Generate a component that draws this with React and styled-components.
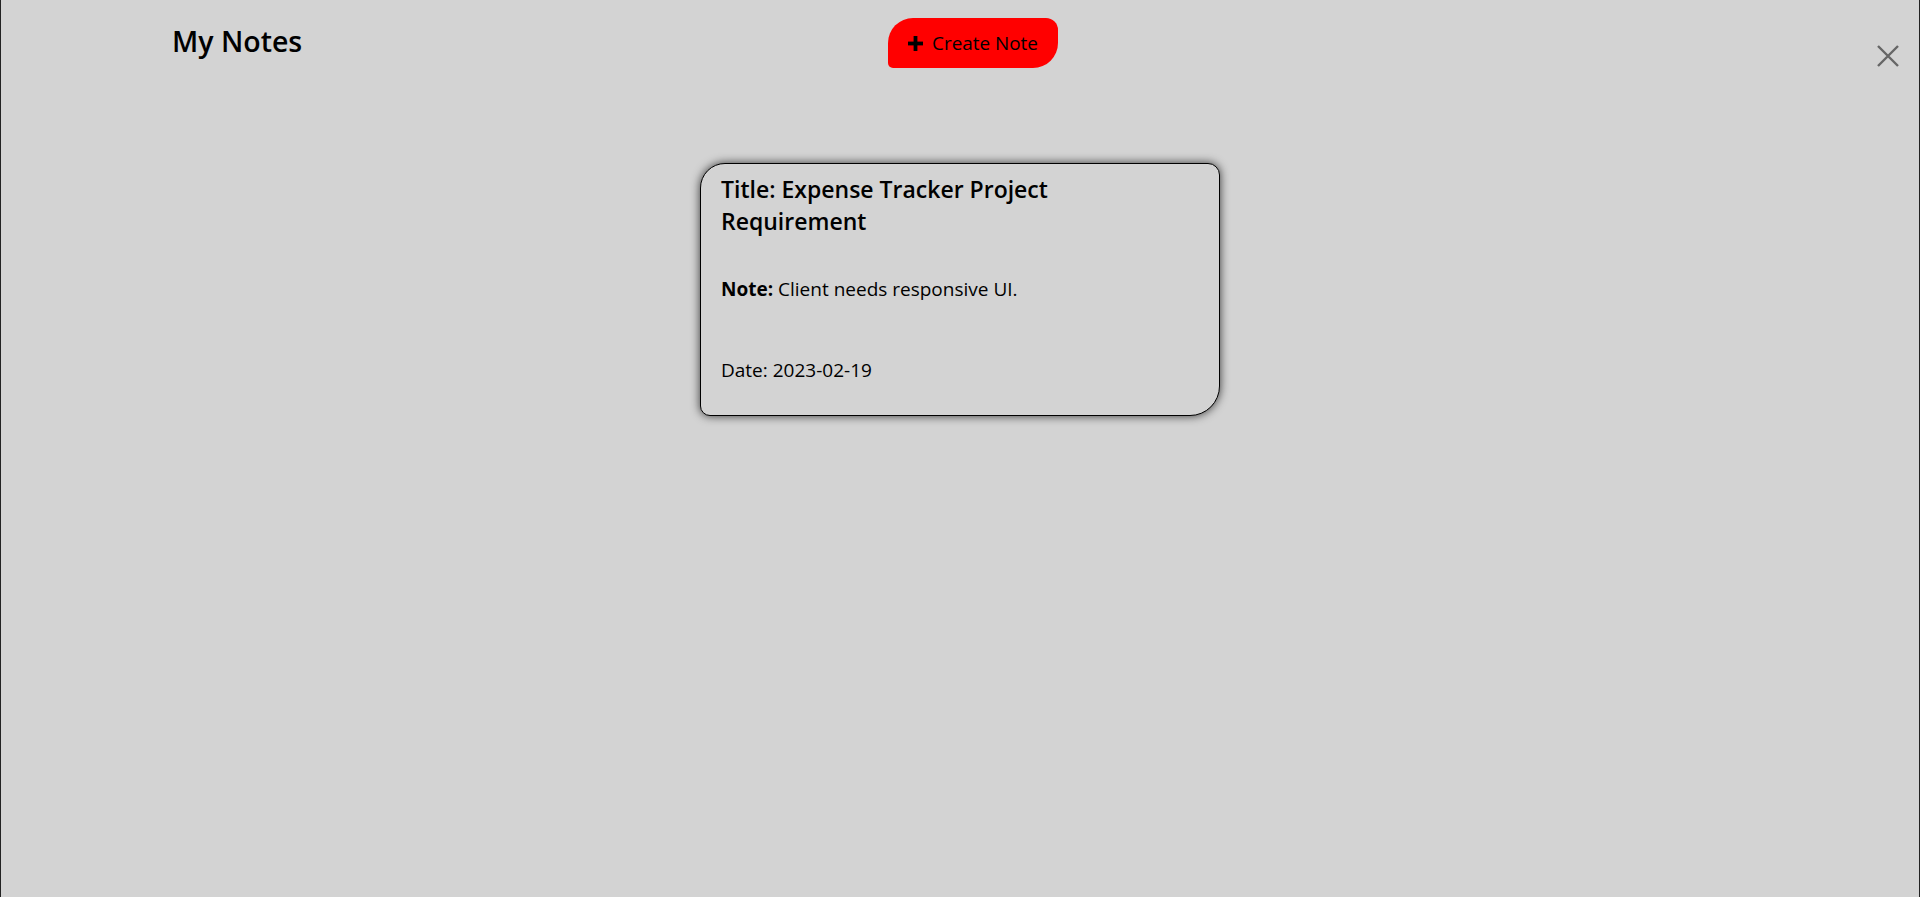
import styled, { createGlobalStyle } from 'styled-components';

const GlobalStyle = createGlobalStyle`
  html, body {
    margin: 0;
    padding: 0;
    background-color: #d3d3d3;
    font-family: "Open Sans", "Noto Sans", sans-serif;
    color: #000;
  }
`;

const notes = [
  {
    id: 1,
    title: 'Expense Tracker Project Requirement',
    note: 'Client needs responsive UI.',
    date: '2023-02-19',
  },
];

const PlusIcon = () => (
  <svg width="15" height="15" viewBox="0 0 15 15">
    <rect x="5.6" y="0" width="3.8" height="15" fill="#000" />
    <rect x="0" y="5.6" width="15" height="3.8" fill="#000" />
  </svg>
);

const CloseIcon = () => (
  <svg width="22" height="22" viewBox="0 0 22 22">
    <path d="M1 1 L21 21 M21 1 L1 21" stroke="#666" strokeWidth="2.4" fill="none" />
  </svg>
);

const NoteCard = ({ note }) => (
  <Card>
    <CardTitle>Title: {note.title}</CardTitle>
    <NoteText>
      <b>Note:</b> {note.note}
    </NoteText>
    <DateText>Date: {note.date}</DateText>
  </Card>
);

const App = () => {
  return (
    <Page>
      <GlobalStyle />
      <Header>
        <Heading>My Notes</Heading>
        <CreateButton>
          <PlusIcon />
          Create Note
        </CreateButton>
        <CloseButton aria-label="close">
          <CloseIcon />
        </CloseButton>
      </Header>
      <NotesList>
        {notes.map((n) => (
          <NoteCard key={n.id} note={n} />
        ))}
      </NotesList>
    </Page>
  );
};

const Page = styled.div`
  box-sizing: border-box;
  min-height: 100vh;
  border-left: 1px solid #222;
  border-right: 1px solid #222;
`;

const Header = styled.header`
  display: flex;
  align-items: flex-start;
  padding: 18px 20px 0 171px;
`;

const Heading = styled.h1`
  width: 716px;
  margin: 3px 0 0;
  font-size: 28.5px;
  font-weight: 600;
  line-height: 40px;
`;

const CreateButton = styled.button`
  display: flex;
  align-items: center;
  justify-content: center;
  gap: 9px;
  width: 170px;
  height: 50px;
  padding: 0;
  border: none;
  border-radius: 25px 12px 25px 5px;
  background-color: #ff0000;
  color: #000;
  font-family: inherit;
  font-size: 18.9px;
  cursor: pointer;
`;

const CloseButton = styled.button`
  display: flex;
  margin: 27px 0 0 auto;
  padding: 0;
  border: none;
  background: none;
  cursor: pointer;
`;

const NotesList = styled.main`
  display: flex;
  justify-content: center;
  padding-top: 95px;
`;

const Card = styled.div`
  box-sizing: border-box;
  width: 520px;
  min-height: 252px;
  padding: 9px 20px 33px;
  border: 1px solid #000;
  border-radius: 25px 12px 30px 10px;
  background-color: #d3d3d3;
  box-shadow: 0 0 10px rgba(0, 0, 0, 0.75);
`;

const CardTitle = styled.h2`
  max-width: 400px;
  margin: 0;
  font-size: 23px;
  font-weight: 600;
  line-height: 32px;
`;

const NoteText = styled.p`
  margin: 40px 0 0;
  font-size: 19px;
  line-height: 24px;

  b {
    font-weight: 700;
  }
`;

const DateText = styled.p`
  margin: 57px 0 0;
  font-size: 19px;
  line-height: 24px;
`;

export default App;
